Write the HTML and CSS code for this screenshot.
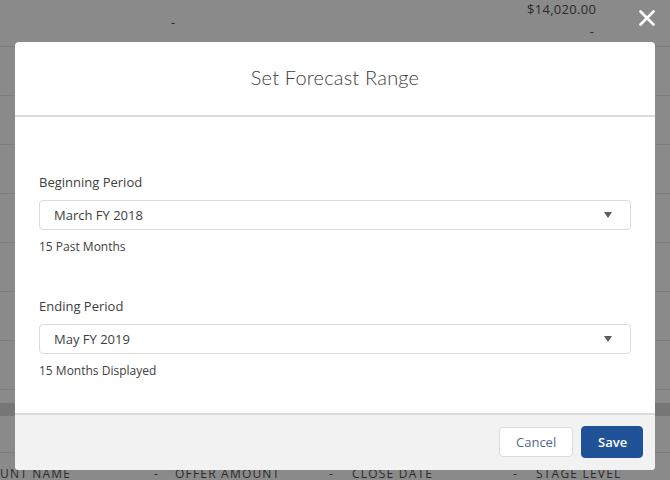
FILE: index.html
```html
<!DOCTYPE html>
<html lang="en">
<head>
    <meta charset="UTF-8">
    <title>Set Forecast Range</title>
    <link rel="stylesheet" href="styles.css">
</head>
<body>
    <div class="page">
        <div class="row row-first">
            <span class="cell cell-dash-a">-</span>
            <span class="cell cell-amount">$14,020.00<br><span class="dash-b">-</span></span>
        </div>
        <div class="row"></div>
        <div class="row"></div>
        <div class="row"></div>
        <div class="row"></div>
        <div class="row"></div>
        <div class="row"></div>
        <div class="row"></div>
        <div class="row-short"></div>
        <div class="band"></div>
        <div class="row row-head"></div>
        <div class="col-heads">
            <span class="col">UNT NAME</span>
            <span class="sort">-</span>
            <span class="col">OFFER AMOUNT</span>
            <span class="sort">-</span>
            <span class="col">CLOSE DATE</span>
            <span class="sort">-</span>
            <span class="col">STAGE LEVEL</span>
        </div>
    </div>

    <button class="close-button" aria-label="Close">
        <svg width="16" height="16" viewBox="0 0 16 16">
            <path d="M1.5 1.5 L14.5 14.5 M14.5 1.5 L1.5 14.5" stroke="#fff" stroke-width="2.6" stroke-linecap="round" fill="none"/>
        </svg>
    </button>

    <div class="modal">
        <div class="modal-header">
            <h2>Set Forecast Range</h2>
        </div>
        <div class="modal-body">
            <div class="field">
                <label>Beginning Period</label>
                <div class="select">
                    <span>March FY 2018</span>
                    <span class="caret"></span>
                </div>
                <div class="help">15 Past Months</div>
            </div>
            <div class="field field-end">
                <label>Ending Period</label>
                <div class="select">
                    <span>May FY 2019</span>
                    <span class="caret"></span>
                </div>
                <div class="help">15 Months Displayed</div>
            </div>
        </div>
        <div class="modal-footer">
            <button class="btn btn-neutral">Cancel</button>
            <button class="btn btn-brand">Save</button>
        </div>
    </div>
</body>
</html>
```

FILE: styles.css
```css
* {
    box-sizing: border-box;
}
body {
    margin: 0;
    font-family: "Open Sans", "Noto Sans", sans-serif;
    background: #8a8a8a;
    height: 480px;
    overflow: hidden;
    color: #3e3e3c;
}

/* страница под затемнением */
.page {
    display: flex;
    flex-direction: column;
}

.row {
    height: 49px;
    flex-shrink: 0;
    border-bottom: 1px solid #7c7c7c;
}

.row-first {
    height: 47px;
    position: relative;
    font-size: 13px;
    color: #2b2b2b;
}

.row-short {
    height: 13px;
    flex-shrink: 0;
}

.band {
    height: 13px;
    flex-shrink: 0;
    background: #777;
}

.row-head {
    height: 37px;
}

.cell-dash-a {
    position: absolute;
    left: 171px;
    top: 13px;
}

.cell-amount {
    position: absolute;
    left: 527px;
    top: 1px;
    line-height: 17px;
    letter-spacing: 0.3px;
    text-align: right;
}

.dash-b {
    display: inline-block;
    margin-top: 5px;
    padding-right: 2px;
}

.col-heads {
    display: grid;
    grid-template-columns: 154px 21px 154px 23px 161px 23px auto;
    flex-shrink: 0;
    white-space: nowrap;
    font-size: 12px;
    letter-spacing: 1.2px;
    color: #2b2b2b;
    margin-top: 12px;
}

/* крестик закрытия */
.close-button {
    position: absolute;
    left: 639px;
    top: 10px;
    width: 16px;
    height: 16px;
    padding: 0;
    border: none;
    background: none;
}
.close-button svg {
    display: block;
}

/* модальное окно */
.modal {
    position: absolute;
    left: 15px;
    top: 42px;
    width: 640px;
    height: 428px;
    background: #fff;
    border-radius: 4px;
    display: flex;
    flex-direction: column;
    overflow: hidden;
}

.modal-header {
    height: 75px;
    border-bottom: 2px solid #dddbda;
    display: flex;
    align-items: center;
    justify-content: center;
}

.modal-header h2 {
    margin: 0 0 3px;
    font-family: Lato, sans-serif;
    font-weight: 300;
    font-size: 20px;
    color: #3e3e3c;
    letter-spacing: 0.2px;
}

.modal-body {
    flex-grow: 1;
    padding: 56px 24px 0;
}

.field label {
    display: block;
    font-size: 13px;
    line-height: 18px;
    margin-bottom: 9px;
}

.field-end {
    margin-top: 41px;
}

.select {
    height: 30px;
    border: 1px solid #dddbda;
    border-radius: 4px;
    display: flex;
    align-items: center;
    justify-content: space-between;
    padding: 0 18px 0 14px;
    font-size: 13px;
    color: #3e3e3c;
}

.caret {
    width: 0;
    height: 0;
    border-left: 4.5px solid transparent;
    border-right: 4.5px solid transparent;
    border-top: 6px solid #5c5c5c;
}

.help {
    font-size: 12px;
    line-height: 18px;
    margin-top: 8px;
}

.modal-footer {
    height: 57px;
    background: #f3f2f2;
    border-top: 2px solid #dddbda;
    display: flex;
    justify-content: flex-end;
    align-items: center;
    gap: 8px;
    padding: 0 12px 1px;
}

.btn {
    height: 30px;
    border-radius: 4px;
    font-family: "Open Sans", sans-serif;
    font-size: 13px;
    padding: 0 16px;
    cursor: pointer;
}

.btn-neutral {
    width: 74px;
    background: #fff;
    border: 1px solid #dddbda;
    color: #54698d;
}

.btn-brand {
    width: 62px;
    height: 32px;
    background: #1f5296;
    border: 1px solid #1f5296;
    color: #fff;
    font-weight: 600;
}
```
